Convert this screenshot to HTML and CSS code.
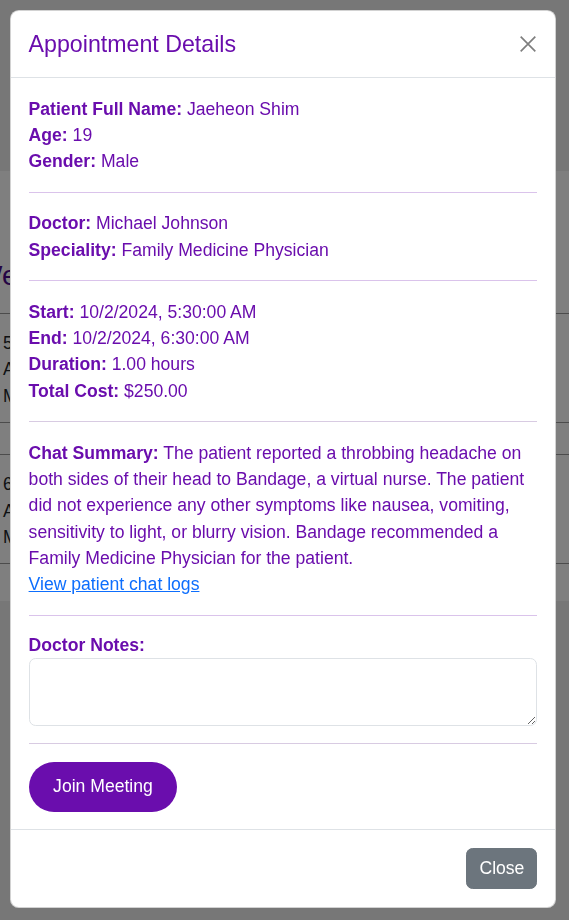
FILE: index.html
```html
<!DOCTYPE html>
<html>
<head>
    <title>Appointments</title>
    <link rel="stylesheet" href="styles.css">
</head>
<body>
    <div class="page">
        <div class="panel">
            <h2 class="page-title">Welcome back</h2>
            <table class="schedule">
                <tr>
                    <td>5:30 AM<br>Appointment<br>Michael Johnson</td>
                </tr>
                <tr class="spacer">
                    <td></td>
                </tr>
                <tr>
                    <td>6:30 AM<br>Appointment<br>Michael Johnson</td>
                </tr>
            </table>
        </div>
    </div>

    <div class="backdrop"></div>

    <div class="modal">
        <div class="modal-header">
            <h5 class="modal-title">Appointment Details</h5>
            <button class="btn-close" aria-label="Close">
                <svg viewBox="0 0 16 16" width="18" height="18">
                    <path d="M1.5 1.5 14.5 14.5M14.5 1.5 1.5 14.5" stroke="#000" stroke-width="1.5" fill="none"/>
                </svg>
            </button>
        </div>
        <div class="modal-body">
            <p><strong>Patient Full Name:</strong> Jaeheon Shim<br>
               <strong>Age:</strong> 19<br>
               <strong>Gender:</strong> Male</p>
            <hr>
            <p><strong>Doctor:</strong> Michael Johnson<br>
               <strong>Speciality:</strong> Family Medicine Physician</p>
            <hr>
            <p><strong>Start:</strong> 10/2/2024, 5:30:00 AM<br>
               <strong>End:</strong> 10/2/2024, 6:30:00 AM<br>
               <strong>Duration:</strong> 1.00 hours<br>
               <strong>Total Cost:</strong> $250.00</p>
            <hr class="muted">
            <p><strong>Chat Summary:</strong> The patient reported a throbbing headache on both sides of their head to Bandage, a virtual nurse. The patient did not experience any other symptoms like nausea, vomiting, sensitivity to light, or blurry vision. Bandage recommended a Family Medicine Physician for the patient.<br>
               <a href="#">View patient chat logs</a></p>
            <hr>
            <label class="notes-label" for="notes">Doctor Notes:</label>
            <textarea id="notes" class="form-control" rows="2"></textarea>
            <hr class="muted">
            <button class="btn-join">Join Meeting</button>
        </div>
        <div class="modal-footer">
            <button class="btn-secondary">Close</button>
        </div>
    </div>
</body>
</html>
```

FILE: styles.css
```css
body {
    margin: 0;
    font-family: "Liberation Sans", Arial, sans-serif;
    font-size: 17.6px;
    line-height: 26.2px;
    color: #212529;
    background-color: #eeeeee;
}

/* page behind the modal */
.page {
    padding-top: 171px;
}
.panel {
    background-color: #fff;
    height: 430px;
    overflow: hidden;
}
.page-title {
    margin: 88px 0 20px -24px;
    font-size: 28px;
    line-height: 34px;
    font-weight: 500;
    color: #4b0a8a;
    white-space: nowrap;
}
.schedule {
    width: 100%;
    border-collapse: collapse;
}
.schedule td {
    border-top: 1px solid #999;
    border-bottom: 1px solid #999;
    padding: 16px 3px 13px;
    line-height: 26.4px;
}
.schedule .spacer td {
    height: 31px;
    padding: 0;
}

.backdrop {
    position: fixed;
    top: 0;
    left: 0;
    right: 0;
    bottom: 0;
    background-color: rgba(0, 0, 0, 0.5);
}

/* modal */
.modal {
    position: fixed;
    top: 10px;
    left: 10px;
    width: 546px;
    box-sizing: border-box;
    background-color: #fff;
    border: 1px solid rgba(0, 0, 0, 0.175);
    border-radius: 8.8px;
    color: #6a0dad;
}
.modal-header {
    display: flex;
    align-items: center;
    justify-content: space-between;
    padding: 16.5px 17.6px;
    border-bottom: 1px solid #dee2e6;
}
.modal-title {
    margin: 0;
    font-size: 23.2px;
    line-height: 33px;
    font-weight: normal;
    color: #6a0dad;
}
.btn-close {
    display: flex;
    padding: 0;
    border: none;
    background: none;
    opacity: 0.5;
}
.modal-body {
    padding: 17.6px;
}
.modal-body p {
    margin: 0;
}
.modal-body strong {
    font-weight: bold;
}
hr {
    margin: 17.6px 0;
    border: 0;
    border-top: 1px solid #dac3eb;
}
hr.muted {
    border-top-color: #d8cbe2;
}
a {
    color: #0d6efd;
}
.notes-label {
    display: block;
    font-weight: bold;
    line-height: 25px;
}
.form-control {
    display: block;
    width: 100%;
    box-sizing: border-box;
    height: 67.5px;
    padding: 6.6px 13.2px;
    font-family: inherit;
    font-size: inherit;
    border: 1px solid #dee2e6;
    border-radius: 6.6px;
}
.btn-join {
    height: 49.5px;
    padding: 0 24.5px;
    border: none;
    border-radius: 25px;
    background-color: #6a0dad;
    color: #fff;
    font-family: inherit;
    font-size: 17.6px;
}
.modal-footer {
    display: flex;
    justify-content: flex-end;
    padding: 17.6px;
    border-top: 1px solid #dee2e6;
}
.btn-secondary {
    height: 41.5px;
    padding: 0 12px;
    border: 1px solid #6c757d;
    border-radius: 6.6px;
    background-color: #6c757d;
    color: #fff;
    font-family: inherit;
    font-size: 17.6px;
}
```
